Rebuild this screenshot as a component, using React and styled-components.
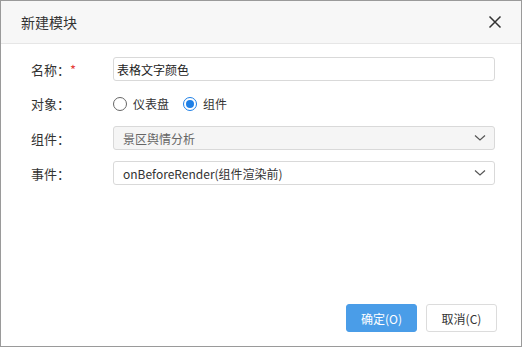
import React, { useState } from 'react';
import styled, { createGlobalStyle } from 'styled-components';

const GlobalStyle = createGlobalStyle`
  html, body { margin: 0; padding: 0; background: #fff; }
  body { font-family: "Microsoft YaHei", "Noto Sans CJK SC", "Liberation Sans", sans-serif; }
  * { box-sizing: border-box; }
`;

const Dialog = styled.div`
  width: 522px;
  height: 347px;
  border: 1px solid #9a9a9a;
  display: flex;
  flex-direction: column;
  background: #fff;
`;

const Header = styled.div`
  height: 43px;
  flex: none;
  background: #f7f7f7;
  border-bottom: 1px solid #e6e6e6;
  display: flex;
  align-items: center;
  justify-content: space-between;
  padding: 0 19px 0 20px;
`;

const Title = styled.div`
  font-size: 14px;
  color: #333;
`;

const Close = styled.button`
  border: 0;
  background: none;
  padding: 0;
  width: 14px;
  height: 14px;
  display: flex;
  cursor: pointer;
`;

const Body = styled.div`
  flex: 1;
  padding: 13px 26px 0 30px;
  display: flex;
  flex-direction: column;
  gap: 11px;
`;

const Row = styled.div`
  display: flex;
  align-items: center;
  height: ${({ h }) => h || 24}px;
`;

const Label = styled.div`
  width: 82px;
  flex: none;
  font-size: 13px;
  color: #333;
`;

const Star = styled.span`
  color: #e5403a;
`;

const Input = styled.input`
  flex: 1;
  height: 24px;
  border: 1px solid #d9d9d9;
  border-radius: 3px;
  padding: 0 3px;
  font: inherit;
  font-size: 12px;
  color: #222;
  outline: none;
`;

const Select = styled.div`
  flex: 1;
  height: 24px;
  border: 1px solid #d9d9d9;
  border-radius: 3px;
  background: ${({ disabled }) => (disabled ? '#f5f5f5' : '#fff')};
  color: ${({ disabled }) => (disabled ? '#666' : '#333')};
  font-size: 12px;
  display: flex;
  align-items: center;
  justify-content: space-between;
  padding: 0 8px 0 9px;
`;

const Radios = styled.div`
  display: flex;
  align-items: center;
  gap: 14px;
`;

const RadioItem = styled.label`
  display: flex;
  align-items: center;
  gap: 6px;
  font-size: 12px;
  color: #333;
  cursor: pointer;
`;

const Circle = styled.span`
  width: 14px;
  height: 14px;
  border-radius: 50%;
  border: 1px solid ${({ on }) => (on ? '#1e7fe6' : '#666')};
  display: flex;
  align-items: center;
  justify-content: center;
  &::after {
    content: '';
    width: 8px;
    height: 8px;
    border-radius: 50%;
    background: ${({ on }) => (on ? '#1e7fe6' : 'transparent')};
  }
`;

const Footer = styled.div`
  display: flex;
  justify-content: flex-end;
  gap: 9px;
  padding: 0 24px 14px 0;
`;

const Button = styled.button`
  width: 71px;
  height: 28px;
  border-radius: 3px;
  font: inherit;
  font-size: 12px;
  cursor: pointer;
  border: 1px solid ${({ primary }) => (primary ? '#4a9de8' : '#dcdcdc')};
  background: ${({ primary }) => (primary ? '#4a9de8' : '#fff')};
  color: ${({ primary }) => (primary ? '#fff' : '#333')};
`;

const Chevron = () => (
  <svg width="12" height="8" viewBox="0 0 12 8">
    <path d="M1 1.5 L6 6 L11 1.5" fill="none" stroke="#555" strokeWidth="1.2" />
  </svg>
);

export default function App() {
  const [target, setTarget] = useState('comp');
  return (
    <>
      <GlobalStyle />
      <Dialog>
        <Header>
          <Title>新建模块</Title>
          <Close>
            <svg width="14" height="14" viewBox="0 0 14 14">
              <path d="M1.5 1.5 L12.5 12.5 M12.5 1.5 L1.5 12.5" stroke="#333" strokeWidth="1.5" />
            </svg>
          </Close>
        </Header>
        <Body>
          <Row>
            <Label>名称：<Star>*</Star></Label>
            <Input defaultValue="表格文字颜色" />
          </Row>
          <Row h={23}>
            <Label>对象：</Label>
            <Radios>
              <RadioItem onClick={() => setTarget('dash')}>
                <Circle on={target === 'dash'} />仪表盘
              </RadioItem>
              <RadioItem onClick={() => setTarget('comp')}>
                <Circle on={target === 'comp'} />组件
              </RadioItem>
            </Radios>
          </Row>
          <Row>
            <Label>组件：</Label>
            <Select disabled>
              <span>景区舆情分析</span>
              <Chevron />
            </Select>
          </Row>
          <Row>
            <Label>事件：</Label>
            <Select>
              <span>onBeforeRender(组件渲染前)</span>
              <Chevron />
            </Select>
          </Row>
        </Body>
        <Footer>
          <Button primary>确定(O)</Button>
          <Button>取消(C)</Button>
        </Footer>
      </Dialog>
    </>
  );
}
